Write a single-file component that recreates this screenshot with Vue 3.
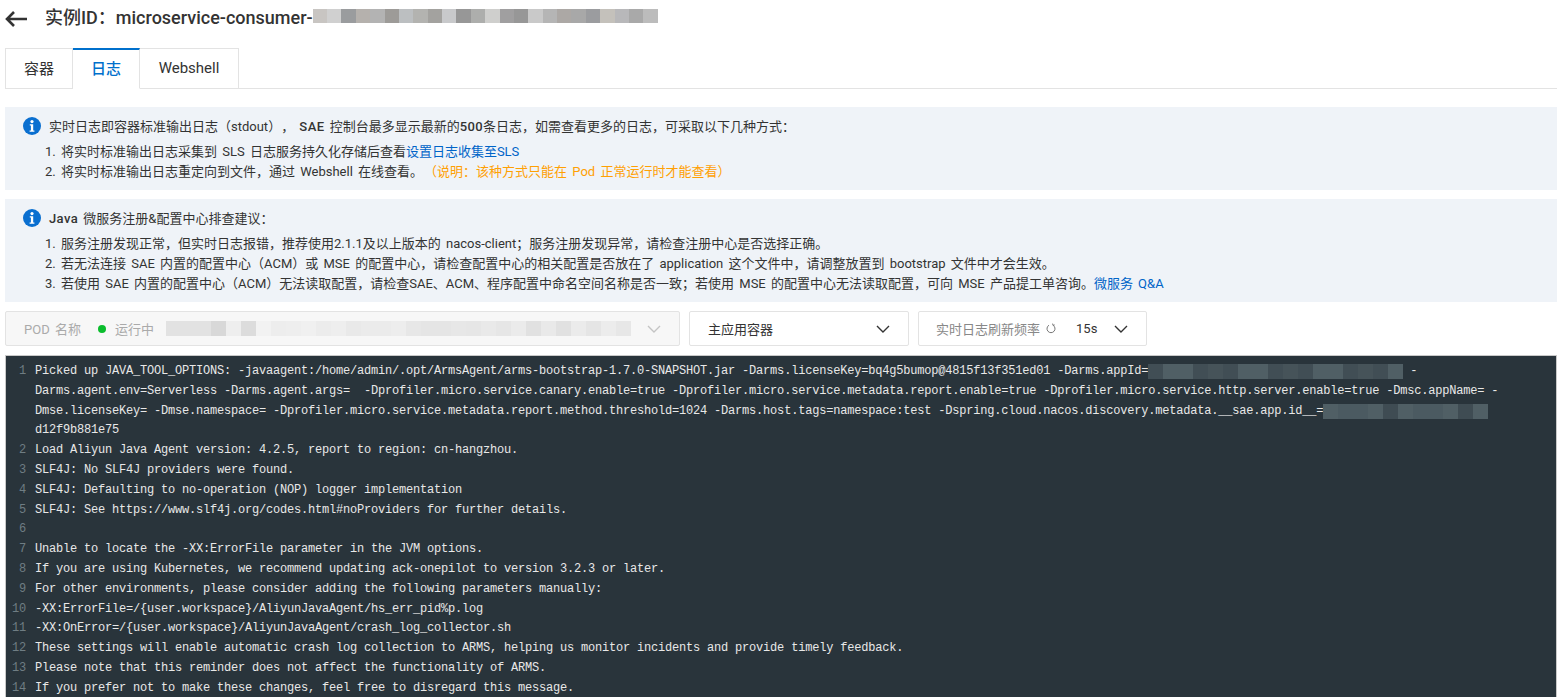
<script setup>
const shade = (seed, n, base) => Array.from({ length: n }, (_, i) => base[(i * 7 + seed * 3 + (i * i) % 5) % base.length])

const titleBlocks = ['#c8c5c2', '#d0d0d0', '#9a9c9e', '#b5b1ad', '#b3b3b3', '#9d9b98', '#bcbfc1', '#b3b3b0', '#a3a29f', '#c8c9cb', '#979797', '#adaeac', '#cfcfcd', '#a09fa0', '#979797', '#c9c9c9', '#b5b5b5', '#aca8a5', '#a8a8a8', '#9b9c9f', '#c4c1bb', '#b8b8ba', '#a9a9a9', '#bcbcbc']
const podBlocks = ['#e2e2e2', '#e2e2e2', '#e2e2e2', '#d8d8d8', '#eeeeee', '#dcdcdc', '#f2f2f2', '#ededed', '#eeeeee', '#f0f0f0', '#ececec', '#eeeeee', '#e9e9e9', '#ebebeb', '#ebebeb', '#ededed', '#e7e7e7', '#e5e5e5', '#e5e5e5', '#e7e7e7', '#e6e6e6', '#e9e9e9', '#e6e6e6', '#ebebeb', '#e1e1e1', '#e9e9e9', '#e1e1e1', '#ebebeb', '#e5e5e5', '#ececec', '#e7e7e7']
const logBlocksA = shade(3, 17, ['#4b5a61', '#3f4c53', '#505f65', '#465359', '#414e55'])
const logBlocksB = shade(4, 11, ['#4b5a61', '#3f4c53', '#505f65', '#465359', '#414e55'])

const rows = [
  { n: 1, parts: ['Picked up JAVA_TOOL_OPTIONS: -javaagent:/home/admin/.opt/ArmsAgent/arms-bootstrap-1.7.0-SNAPSHOT.jar -Darms.licenseKey=bq4g5bumop@4815f13f351ed01 -Darms.appId='], blur: logBlocksA, after: ' -' },
  { parts: ['Darms.agent.env=Serverless -Darms.agent.args=  -Dprofiler.micro.service.canary.enable=true -Dprofiler.micro.service.metadata.report.enable=true -Dprofiler.micro.service.http.server.enable=true -Dmsc.appName= -'] },
  { parts: ['Dmse.licenseKey= -Dmse.namespace= -Dprofiler.micro.service.metadata.report.method.threshold=1024 -Darms.host.tags=namespace:test -Dspring.cloud.nacos.discovery.metadata.__sae.app.id__='], blur: logBlocksB },
  { parts: ['d12f9b881e75'] },
  { n: 2, parts: ['Load Aliyun Java Agent version: 4.2.5, report to region: cn-hangzhou.'] },
  { n: 3, parts: ['SLF4J: No SLF4J providers were found.'] },
  { n: 4, parts: ['SLF4J: Defaulting to no-operation (NOP) logger implementation'] },
  { n: 5, parts: ['SLF4J: See https://www.slf4j.org/codes.html#noProviders for further details.'] },
  { n: 6, parts: [''] },
  { n: 7, parts: ['Unable to locate the -XX:ErrorFile parameter in the JVM options.'] },
  { n: 8, parts: ['If you are using Kubernetes, we recommend updating ack-onepilot to version 3.2.3 or later.'] },
  { n: 9, parts: ['For other environments, please consider adding the following parameters manually:'] },
  { n: 10, parts: ['-XX:ErrorFile=/{user.workspace}/AliyunJavaAgent/hs_err_pid%p.log'] },
  { n: 11, parts: ['-XX:OnError=/{user.workspace}/AliyunJavaAgent/crash_log_collector.sh'] },
  { n: 12, parts: ['These settings will enable automatic crash log collection to ARMS, helping us monitor incidents and provide timely feedback.'] },
  { n: 13, parts: ['Please note that this reminder does not affect the functionality of ARMS.'] },
  { n: 14, parts: ['If you prefer not to make these changes, feel free to disregard this message.'] },
]
</script>

<template>
  <div class="page">
    <header class="head">
      <svg class="back" width="22" height="16" viewBox="0 0 22 16" fill="none" stroke="#333" stroke-width="2.6">
        <path d="M22 8H2M9 1 2 8l7 7" />
      </svg>
      <h1 class="title">实例ID&#xFF1A;microservice-consumer-</h1>
      <span class="blur title-blur">
        <i v-for="(c, i) in titleBlocks" :key="i" :style="{ background: c }"></i>
      </span>
    </header>

    <nav class="tabs">
      <a class="tab t1">容器</a>
      <a class="tab t2 active">日志</a>
      <a class="tab t3">Webshell</a>
    </nav>

    <section class="alert a1">
      <svg class="info" width="18" height="18" viewBox="0 0 18 18">
        <circle cx="9" cy="9" r="9" fill="#0a6fd0" />
        <circle cx="9" cy="4.6" r="1.6" fill="#fff" />
        <path d="M6.8 7.3h3.4v6.2h1.2v1.3H6.6v-1.3h1.3V8.6H6.8z" fill="#fff" />
      </svg>
      <div class="alert-body">
        <p class="lead">实时日志即容器标准输出日志&#xFF08;stdout&#xFF09;&#xFF0C; <b>SAE</b> 控制台最多显示最新的<b>500</b>条日志&#xFF0C;如需查看更多的日志&#xFF0C;可采取以下几种方式&#xFF1A;</p>
        <ol>
          <li>将实时标准输出日志采集到 SLS 日志服务持久化存储后查看<a class="link">设置日志收集至SLS</a></li>
          <li>将实时标准输出日志重定向到文件&#xFF0C;通过 Webshell 在线查看。<span class="warn">&#xFF08;说明&#xFF1A;该种方式只能在 Pod 正常运行时才能查看&#xFF09;</span></li>
        </ol>
      </div>
    </section>

    <section class="alert a2">
      <svg class="info" width="18" height="18" viewBox="0 0 18 18">
        <circle cx="9" cy="9" r="9" fill="#0a6fd0" />
        <circle cx="9" cy="4.6" r="1.6" fill="#fff" />
        <path d="M6.8 7.3h3.4v6.2h1.2v1.3H6.6v-1.3h1.3V8.6H6.8z" fill="#fff" />
      </svg>
      <div class="alert-body">
        <p class="lead"><b>Java</b> 微服务注册&amp;配置中心排查建议&#xFF1A;</p>
        <ol>
          <li>服务注册发现正常&#xFF0C;但实时日志报错&#xFF0C;推荐使用2.1.1及以上版本的 nacos-client&#xFF1B;服务注册发现异常&#xFF0C;请检查注册中心是否选择正确。</li>
          <li>若无法连接 SAE 内置的配置中心&#xFF08;ACM&#xFF09;或 MSE 的配置中心&#xFF0C;请检查配置中心的相关配置是否放在了 application 这个文件中&#xFF0C;请调整放置到 bootstrap 文件中才会生效。</li>
          <li>若使用 SAE 内置的配置中心&#xFF08;ACM&#xFF09;无法读取配置&#xFF0C;请检查SAE、ACM、程序配置中命名空间名称是否一致&#xFF1B;若使用 MSE 的配置中心无法读取配置&#xFF0C;可向 MSE 产品提工单咨询。<a class="link">微服务 Q&amp;A</a></li>
        </ol>
      </div>
    </section>

    <div class="controls">
      <div class="select pod">
        <span class="muted">POD 名称</span>
        <span class="dot"></span>
        <span class="muted">运行中</span>
        <span class="blur pod-blur">
          <i v-for="(c, i) in podBlocks" :key="i" :style="{ background: c }"></i>
        </span>
        <svg class="chev" width="14" height="8" viewBox="0 0 14 8" fill="none" stroke="#c4c4c4" stroke-width="1.4"><path d="m1 1 6 6 6-6" /></svg>
      </div>
      <div class="select container">
        <span>主应用容器</span>
        <svg class="chev" width="14" height="8" viewBox="0 0 14 8" fill="none" stroke="#333" stroke-width="1.4"><path d="m1 1 6 6 6-6" /></svg>
      </div>
      <div class="select refresh">
        <span class="gray">实时日志刷新频率</span>
        <svg class="spin" width="10" height="11" viewBox="0 0 10 11" fill="none" stroke="#777" stroke-width="1"><path d="M7 2.2a4 4 0 1 1-4 0" /><path d="M6.6.6 7 2.4l1.7-.5" /></svg>
        <span class="rate">15s</span>
        <svg class="chev" width="14" height="8" viewBox="0 0 14 8" fill="none" stroke="#333" stroke-width="1.4"><path d="m1 1 6 6 6-6" /></svg>
      </div>
    </div>

    <div class="log">
      <div v-for="(r, i) in rows" :key="i" class="row">
        <span class="num">{{ r.n }}</span>
        <span class="txt">{{ r.parts[0] }}<span v-if="r.blur" class="blur log-blur"><i v-for="(c, j) in r.blur" :key="j" :style="{ background: c }"></i></span>{{ r.after }}</span>
      </div>
    </div>
  </div>
</template>

<style>
html, body { margin: 0; overflow: hidden; background: #fff; }
</style>

<style scoped>
.page {
  height: 697px;
  overflow: hidden;
  padding: 0 5px;
  box-sizing: border-box;
  font-family: Roboto, "Noto Sans CJK SC", sans-serif;
  font-size: 13px;
  color: #333;
  word-spacing: 2px;
  text-spacing-trim: space-all;
}
.head { height: 48px; display: flex; align-items: flex-start; padding-top: 9px; box-sizing: border-box; }
.back { margin-top: 2px; flex: none; }
.title { margin: -1px 0 0 18px; font-size: 18px; font-weight: 500; line-height: 20px; color: #333; }
.blur { display: inline-flex; vertical-align: top; }
.blur i { display: block; flex: 1; height: 100%; }
.title-blur { width: 345px; height: 14px; }

.tabs { display: flex; height: 41px; border-bottom: 1px solid #e3e3e3; box-sizing: border-box; }
.tab {
  display: flex; align-items: center; justify-content: center;
  height: 41px; box-sizing: border-box; padding-bottom: 2px;
  border: 1px solid #e3e3e3; border-left: 0;
  font-size: 15px; color: #333; background: #fff;
}
.t1 { width: 68px; border-left: 1px solid #e3e3e3; }
.t2 { width: 67px; }
.t3 { width: 99px; }
.active { color: #0070cc; border-top: 2px solid #0070cc; border-bottom-color: #fff; font-weight: 500; padding-bottom: 3px; }

.alert { background: #eff3f8; display: flex; padding-left: 18px; box-sizing: border-box; }
.a1 { height: 83px; margin-top: 18px; padding-top: 10px; }
.a2 { height: 103px; margin-top: 9px; padding-top: 10px; }
.info { flex: none; }
.alert-body { margin-left: 8px; padding-top: 1px; }
.lead { margin: 0; line-height: 18px; }
.lead b { font-weight: 500; letter-spacing: 0.4px; }
ol { margin: 6px 0 0; padding: 0 0 0 12px; list-style-position: outside; }
li { line-height: 20px; padding-left: 0; }
.link { color: #0064c8; }
.warn { color: #ffa003; margin-left: 1px; }

.controls { display: flex; gap: 9px; margin-top: 9px; height: 35px; }
.select {
  display: flex; align-items: center; box-sizing: border-box; height: 35px;
  border: 1px solid #e3e3e3; border-radius: 2px; background: #fff; padding: 0 18px;
}
.pod { width: 675px; background: #f7f7f7; }
.muted { color: #aaa; }
.dot { width: 8px; height: 8px; border-radius: 50%; background: #0bbd2d; margin: 0 9px 0 17px; }
.pod-blur { width: 465px; height: 15px; margin-left: 12px; }
.pod .chev { margin-left: auto; }
.container { width: 220px; }
.container .chev { margin-left: auto; }
.refresh { width: 229px; padding-left: 17px; }
.gray { color: #888; }
.spin { margin-left: 6px; }
.rate { margin-left: 20px; }
.refresh .chev { margin-left: auto; }

.log {
  margin-top: 9px; height: 342px; overflow: hidden; background: #29343b;
  border: 1px solid #c9c9c9; border-width: 1px 1px 0 1px; box-sizing: border-box; padding-top: 6px;
  font-family: "Liberation Mono", monospace; font-size: 12px; color: #e8e8e8; letter-spacing: -0.2px; word-spacing: 0;
}
.row { display: flex; height: 19.8px; line-height: 19.8px; white-space: pre; }
.num { width: 20px; flex: none; text-align: right; color: #6f7d83; }
.txt { margin-left: 9px; }
.log-blur { height: 15px; margin-top: 2px; }
.row:nth-child(1) .log-blur { width: 255px; }
.row:nth-child(3) .log-blur { width: 165px; }
</style>
